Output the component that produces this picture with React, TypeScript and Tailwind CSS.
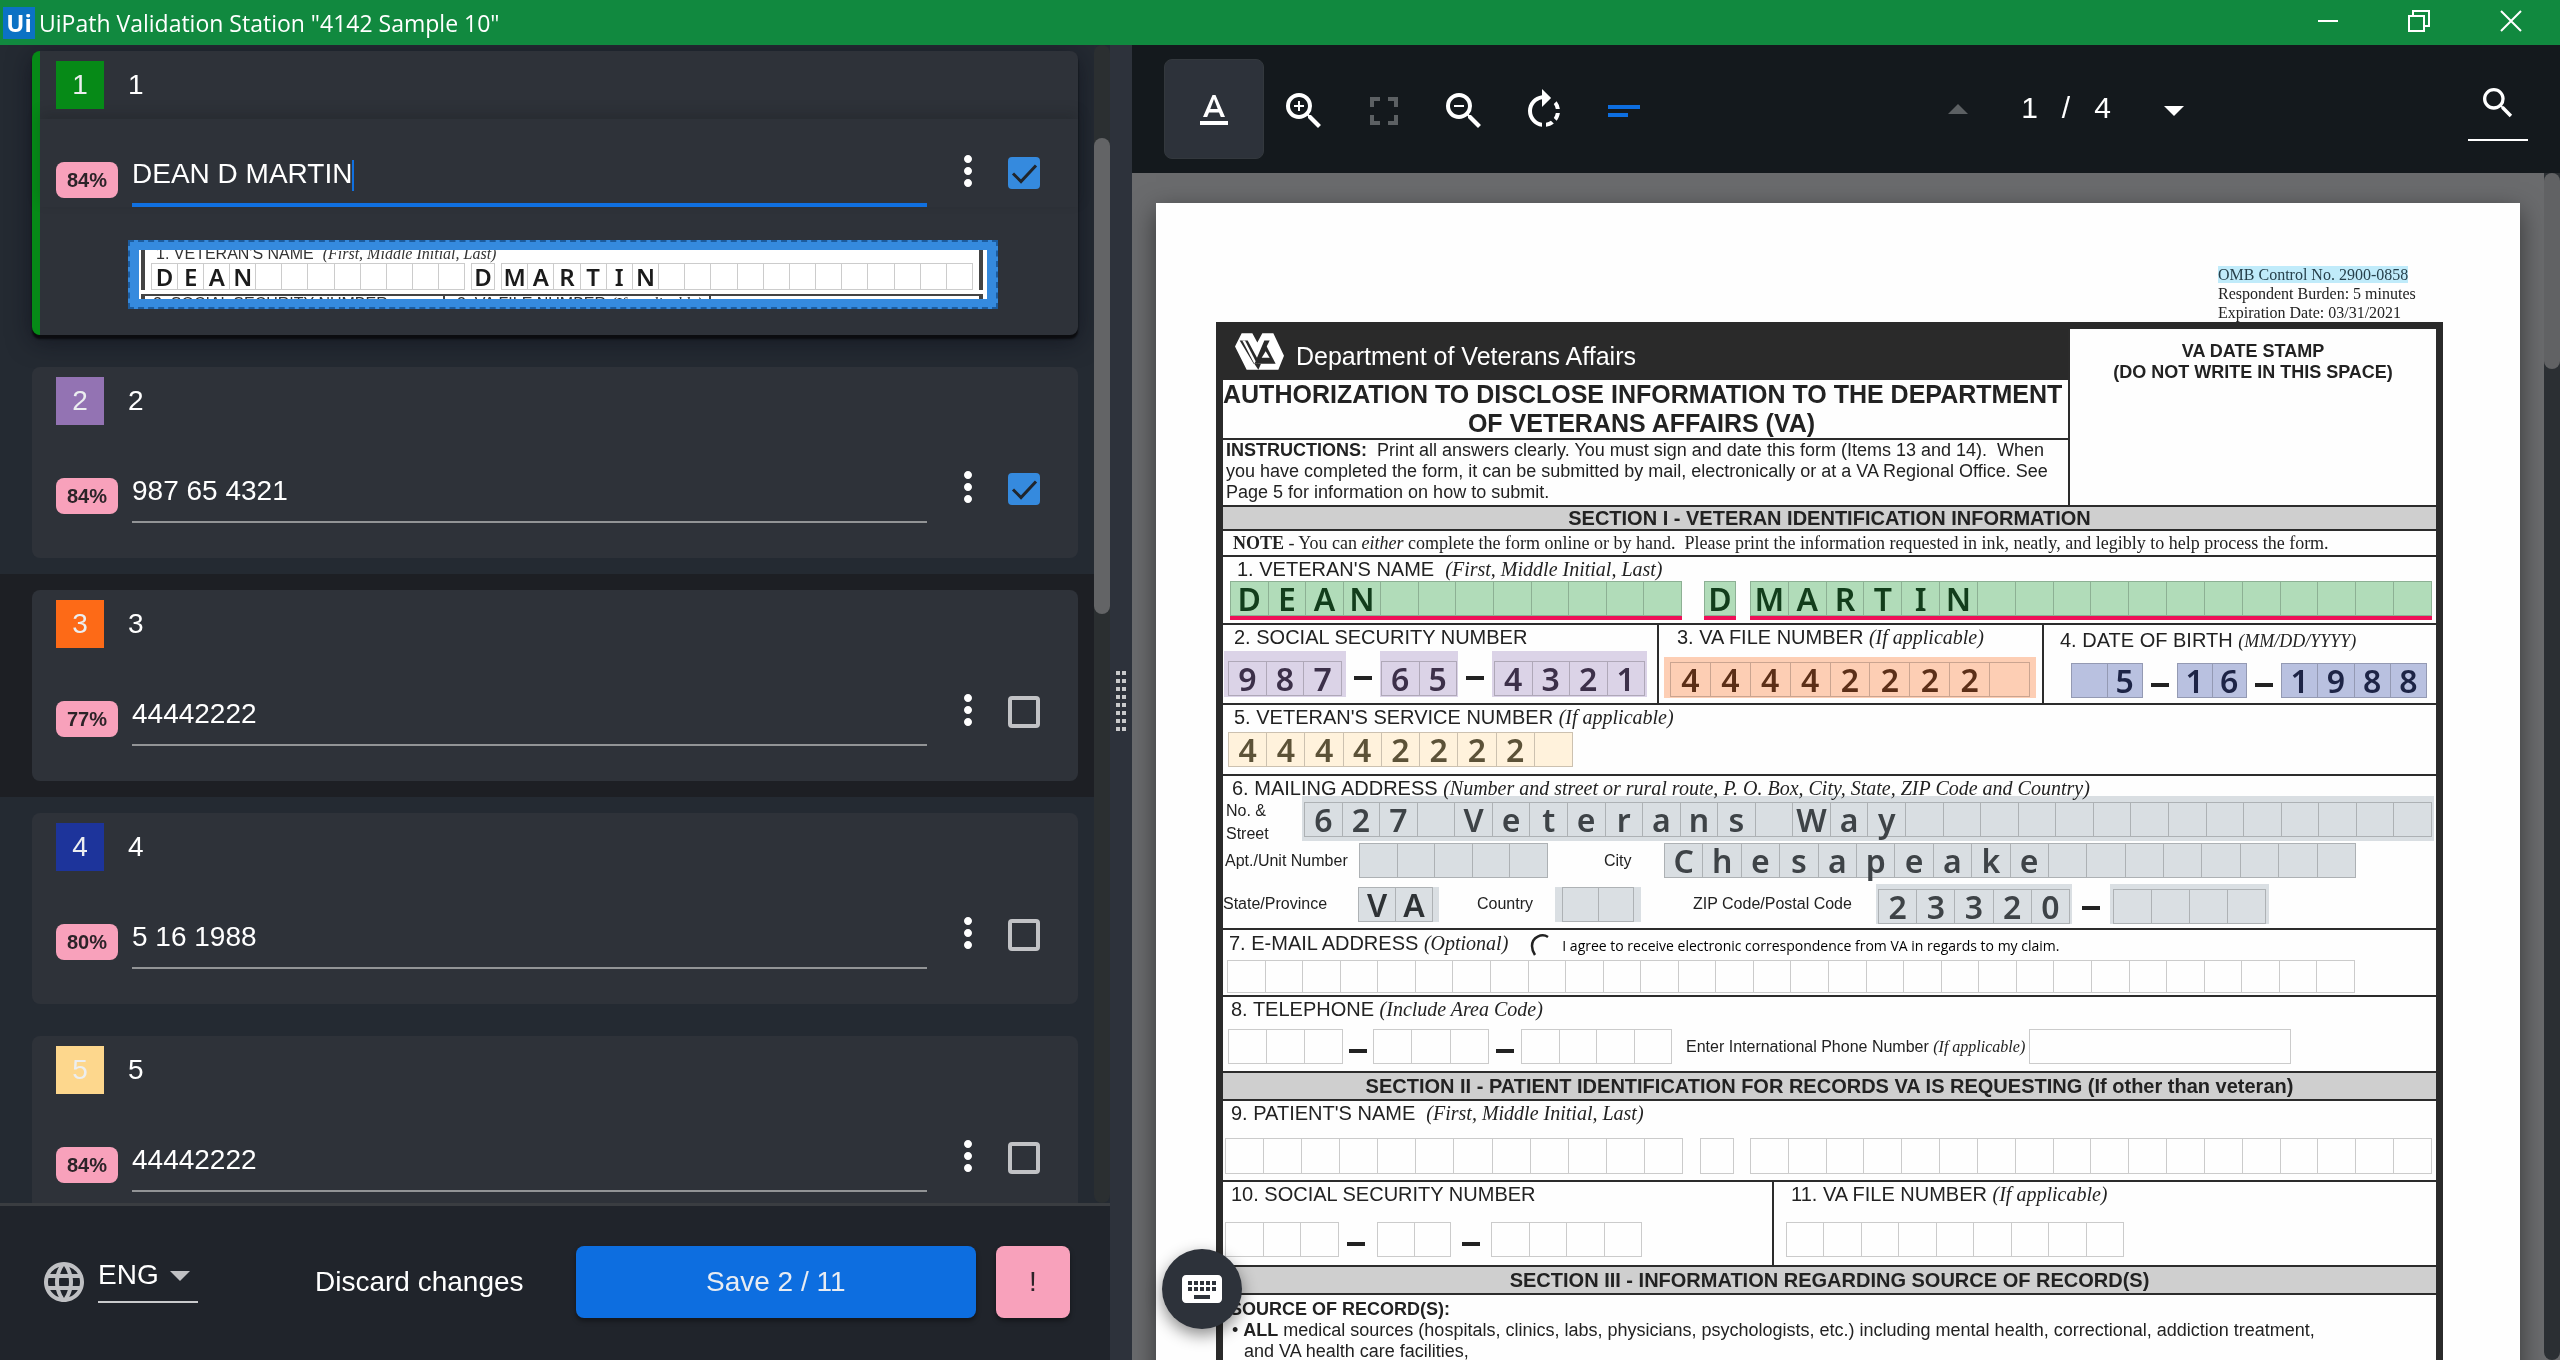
import type { ReactNode } from "react";
import {
  MdArrowDropDown,
  MdArrowDropUp,
  MdFullscreen,
  MdKeyboard,
  MdLanguage,
  MdMoreVert,
  MdRotateRight,
  MdSearch,
  MdShortText,
  MdTextFormat,
  MdZoomIn,
  MdZoomOut,
} from "react-icons/md";

/* ---------- extraction fields (left panel) ---------- */

type Field = {
  id: string;
  value: string;
  confidence: string;
  swatch: string;
  verified: boolean;
  active?: boolean;
  striped?: boolean;
};

const fields: Field[] = [
  { id: "1", value: "DEAN D MARTIN", confidence: "84%", swatch: "bg-[#068a17]", verified: true, active: true },
  { id: "2", value: "987 65 4321", confidence: "84%", swatch: "bg-[#9373b3]", verified: true },
  { id: "3", value: "44442222", confidence: "77%", swatch: "bg-[#fd6a17]", verified: false, striped: true },
  { id: "4", value: "5 16 1988", confidence: "80%", swatch: "bg-[#1d349b]", verified: false },
  { id: "5", value: "44442222", confidence: "84%", swatch: "bg-[#fdd78d]", verified: false },
];

function Snippet() {
  return (
    <div className="mr-[80px] ml-[88px] h-[69px] border-2 border-dashed border-[#1c5c9f] bg-[#358ade] px-[9px] py-2">
      <div className="h-[49px] overflow-hidden bg-white pr-1 pl-[2px] font-['Liberation_Sans'] text-[#333]">
        <div className="border-x-4 border-[#444] px-[6px]">
          <p className="-mt-1 pl-[5px] text-[16px] leading-[16px]">
            1. VETERAN'S NAME&nbsp; <i className="font-['Liberation_Serif']">(First, Middle Initial, Last)</i>
          </p>
          <div className="flex justify-between pt-[1px]">
            <Comb text="DEAN" count={12} width="w-[314px]" height="h-[27px]" size="text-[24px] leading-[25px]" ink="text-[#1b1b1b]" />
            <Comb text="D" count={1} width="w-[24px]" height="h-[27px]" size="text-[24px] leading-[25px]" ink="text-[#1b1b1b]" />
            <Comb text="MARTIN" count={18} width="w-[472px]" height="h-[27px]" size="text-[24px] leading-[25px]" ink="text-[#1b1b1b]" />
          </div>
        </div>
        <div className="mt-1 flex border-x-4 border-t-2 border-[#444] text-[16px] leading-[16px]">
          <span className="w-[300px] border-r-2 border-[#444] pl-2">2. SOCIAL SECURITY NUMBER</span>
          <span className="w-[266px] border-r-2 border-[#444] pl-3">
            3. VA FILE NUMBER <i className="font-['Liberation_Serif']">(If applicable)</i>
          </span>
        </div>
      </div>
    </div>
  );
}

function FieldCard({ field }: { field: Field }) {
  const { id, value, confidence, swatch, verified, active, striped } = field;
  return (
    <section className={`pr-4 pb-4 pl-8 ${active ? "pt-[6px]" : "pt-4"} ${striped ? "bg-[#1d1f24]" : ""}`}>
      <div
        className={`rounded-lg bg-[#2e3239] ${
          active ? "h-[284px] border-l-8 border-[#068a17] pl-4 shadow-[0_4px_2px_#0b0c0f,0_6px_24px_rgba(10,12,24,0.6)]" : "h-[191px] pl-6"
        }`}
      >
        <div className={`flex items-center gap-6 pt-[10px] ${active ? "pb-[10px]" : ""}`}>
          <span className={`grid size-12 place-items-center text-[28px] leading-8 text-[#eceef0] ${swatch}`}>{id}</span>
          <label htmlFor={`field-${id}`} className="text-[28px] leading-8 text-white">
            {id}
          </label>
        </div>
        <div className={`flex items-start pr-[38px] ${active ? "-ml-4 pt-[22px] pl-4 shadow-[0_-6px_12px_rgba(20,22,24,0.22)]" : "pt-8"}`}>
          <span className="mt-[21px] h-9 w-[62px] rounded-lg bg-[#f8a1bb] text-center text-[20px] leading-9 font-bold text-[#2c2328]">
            {confidence}
          </span>
          <div className="relative ml-[14px] flex min-w-0 flex-1">
            <input
              id={`field-${id}`}
              defaultValue={value}
              className={`h-[66px] w-full bg-transparent pt-1 text-[28px] text-white outline-none ${
                active ? "border-b-4 border-[#1070e0]" : "border-b-2 border-[#929496]"
              }`}
            />
            {active && <span className="absolute top-[19px] left-[220px] h-[31px] w-[2px] bg-[#1070e0]" />}
          </div>
          <button aria-label={`Field ${id} options`} className="mt-[6px] ml-[17px] text-white">
            <MdMoreVert className="size-12" />
          </button>
          <label className="mt-4 ml-4 grid size-8">
            <input
              type="checkbox"
              defaultChecked={verified}
              aria-label={`Field ${id} verified`}
              className="col-start-1 row-start-1 size-8 appearance-none rounded-[4px] border-4 border-[#c1c2c5] checked:border-[#358ade] checked:bg-[#358ade]"
            />
            {verified && (
              <svg viewBox="0 0 32 32" className="pointer-events-none col-start-1 row-start-1 size-8" fill="none" stroke="#20252c" strokeWidth="3">
                <path d="M5 16.5l8 8L28 8.5" />
              </svg>
            )}
          </label>
        </div>
        {active && (
          <div className="-ml-6 pt-[33px] pl-2">
            <Snippet />
          </div>
        )}
      </div>
    </section>
  );
}

function FieldsPanel() {
  return (
    <div className="flex min-h-0 min-w-0 flex-col bg-[#242a32]">
      <div className="flex min-h-0 flex-1">
        <div className="min-w-0 flex-1 overflow-hidden">
          {fields.map((f) => (
            <FieldCard key={f.id} field={f} />
          ))}
        </div>
        <div className="w-4 rounded-full bg-[#2b2f31] pt-[93px]">
          <div className="h-[476px] rounded-full bg-[#636466]" />
        </div>
      </div>
      <footer className="flex h-[157px] items-center border-t-[3px] border-[#3a3d41] bg-[#20242b] px-10 pb-[3px] text-[28px]">
        <MdLanguage className="size-12 shrink-0 text-[#bfc0c3]" />
        <label className="-mt-[3px] ml-[10px] flex w-[100px] items-center border-b-2 border-[#c9cacc] pb-2">
          <select aria-label="Language" className="w-[64px] shrink-0 appearance-none bg-transparent leading-9 text-white outline-none">
            <option>ENG</option>
          </select>
          <MdArrowDropDown className="-my-2 -ml-[6px] size-12 shrink-0 text-[#bfc0c3]" />
        </label>
        <button className="ml-[117px] shrink-0 text-white">Discard changes</button>
        <button className="ml-[52px] h-[72px] flex-1 rounded-lg bg-[#0d6ee0] text-[#e8ecf2] shadow-[0_3px_5px_rgba(0,0,0,0.4)]">Save 2 / 11</button>
        <button aria-label="Report exception" className="ml-5 h-[72px] w-[74px] rounded-lg bg-[#f8a1bb] text-[#2c2328] shadow-[0_3px_5px_rgba(0,0,0,0.4)]">
          !
        </button>
      </footer>
    </div>
  );
}

/* ---------- document page (right panel) ---------- */

type CombProps = {
  text?: string;
  count: number;
  width: string;
  height?: string;
  size?: string;
  ink?: string;
};

function Comb({ text = "", count, width, height = "h-[35px]", size = "text-[32px] leading-[33px]", ink = "text-[#222]" }: CombProps) {
  return (
    <div className={`flex shrink-0 border border-black/20 ${width} ${height}`}>
      {Array.from({ length: count }, (_, i) => (
        <span
          key={i}
          className={`flex-1 basis-0 border-r border-black/20 text-center font-['Noto_Sans'] font-semibold last:border-r-0 ${size} ${ink}`}
        >
          {text[i] ?? ""}
        </span>
      ))}
    </div>
  );
}

function Dash({ gap = "mx-2" }: { gap?: string }) {
  return <span className={`mt-2 h-1 w-[18px] shrink-0 bg-[#222] ${gap}`} />;
}

function Serif({ children, small }: { children: ReactNode; small?: boolean }) {
  return <i className={`font-['Liberation_Serif'] ${small ? "text-[18px]" : "text-[20px]"}`}>{children}</i>;
}

function Label({ children, className = "pl-2" }: { children: ReactNode; className?: string }) {
  return <p className={`text-[20px] leading-[24px] whitespace-nowrap ${className}`}>{children}</p>;
}

function Row({ children, className = "" }: { children: ReactNode; className?: string }) {
  return <div className={`border-b-2 border-[#2c2c2c] ${className}`}>{children}</div>;
}

function SectionTitle({ children, tall }: { children: ReactNode; tall?: boolean }) {
  return (
    <h3
      className={`border-b-2 border-[#2c2c2c] bg-[#cfcfcf] text-center text-[20px] font-bold whitespace-nowrap ${tall ? "leading-[26px]" : "leading-[22px]"}`}
    >
      {children}
    </h3>
  );
}

function VaLogo() {
  return (
    <svg viewBox="0 0 147 110" className="h-[37px] w-[49px]">
      <path d="M20 0H52L67 28 82 0H115L147 68 130 110H35L0 40z" fill="#fff" />
      <path d="M14 22H38L66 74 88 22H104L100 30 68 92H56z" fill="#2a2a2a" />
      <path d="M22 22H30L62 84 58 92z" fill="#fff" />
      <path d="M92 34L66 92H122z" fill="#2a2a2a" />
      <path d="M92 54L80 74H104z" fill="#fff" />
      <path d="M58 92L70 110 78 92z" fill="#2a2a2a" />
    </svg>
  );
}

function DocumentPage() {
  return (
    <article className="h-[1300px] w-full bg-[#fefefe] pt-[62px] pr-[77px] pl-[60px] font-['Liberation_Sans'] text-[#222] shadow-[0_8px_24px_rgba(0,0,0,0.5)]">
      <div className="ml-auto w-[225px] font-['Liberation_Serif'] text-[16px] leading-[19px] whitespace-nowrap">
        <p>
          <mark className="bg-[#c0ebfa] text-[#27414c]">OMB Control No. 2900-0858</mark>
        </p>
        <p>Respondent Burden: 5 minutes</p>
        <p>Expiration Date: 03/31/2021</p>
      </div>

      <div className="border-[7px] border-[#2a2a2a]">
        <div className="flex border-b-2 border-[#2c2c2c]">
          <div className="min-w-0 flex-1 border-r-2 border-[#2c2c2c]">
            <div className="flex h-[51px] items-center gap-3 bg-[#2a2a2a] pb-[6px] pl-3 text-white">
              <VaLogo />
              <span className="pt-2 text-[25px] leading-8">Department of Veterans Affairs</span>
            </div>
            <h2 className="border-b-2 border-[#2c2c2c] pr-2 text-center text-[25px] leading-[29px] font-bold whitespace-nowrap">
              AUTHORIZATION TO DISCLOSE INFORMATION TO THE DEPARTMENT
              <br />
              OF VETERANS AFFAIRS (VA)
            </h2>
            <p className="pb-[2px] pl-[3px] text-[18px] leading-[21px] whitespace-nowrap">
              <b>INSTRUCTIONS:</b>&nbsp; Print all answers clearly. You must sign and date this form (Items 13 and 14).&nbsp; When
              <br />
              you have completed the form, it can be submitted by mail, electronically or at a VA Regional Office. See
              <br />
              Page 5 for information on how to submit.
            </p>
          </div>
          <p className="w-[366px] pt-3 text-center text-[18px] leading-[21px] font-bold">
            VA DATE STAMP
            <br />
            (DO NOT WRITE IN THIS SPACE)
          </p>
        </div>

        <SectionTitle>SECTION I - VETERAN IDENTIFICATION INFORMATION</SectionTitle>
        <Row>
          <p className="pl-[10px] font-['Liberation_Serif'] text-[18px] leading-[24px] whitespace-nowrap">
            <b>NOTE</b> - You can <i>either</i> complete the form online or by hand.&nbsp; Please print the information requested in ink, neatly, and
            legibly to help process the form.
          </p>
        </Row>

        <Row className="h-[68px]">
          <Label className="pl-[14px]">
            1. VETERAN'S NAME&nbsp; <Serif>(First, Middle Initial, Last)</Serif>
          </Label>
          <div className="flex items-start pl-[7px]">
            <div className="border-b-4 border-[#ee1058] bg-[#b1dcb9]">
              <Comb text="DEAN" count={12} width="w-[452px]" ink="text-[#123d1b]" />
            </div>
            <div className="ml-[22px] border-b-4 border-[#ee1058] bg-[#b1dcb9]">
              <Comb text="D" count={1} width="w-[32px]" ink="text-[#123d1b]" />
            </div>
            <div className="ml-[14px] border-b-4 border-[#ee1058] bg-[#b1dcb9]">
              <Comb text="MARTIN" count={18} width="w-[682px]" ink="text-[#123d1b]" />
            </div>
          </div>
        </Row>

        <Row className="flex h-[80px]">
          <div className="w-[436px] border-r-2 border-[#2c2c2c]">
            <Label className="pl-[11px]">2. SOCIAL SECURITY NUMBER</Label>
            <div className="flex items-center pt-[2px] pl-[1px]">
              <div className="bg-[#dbd3e7] px-1 pt-[10px] pb-[1px]">
                <Comb text="987" count={3} width="w-[114px]" ink="text-[#3c3049]" />
              </div>
              <Dash />
              <div className="bg-[#dbd3e7] px-[1px] pt-[10px] pb-[1px]">
                <Comb text="65" count={2} width="w-[76px]" ink="text-[#3c3049]" />
              </div>
              <Dash />
              <div className="bg-[#dbd3e7] px-[2px] pt-[10px] pb-[1px]">
                <Comb text="4321" count={4} width="w-[151px]" ink="text-[#3c3049]" />
              </div>
            </div>
          </div>
          <div className="w-[385px] border-r-2 border-[#2c2c2c]">
            <Label className="pl-[18px]">
              3. VA FILE NUMBER <Serif>(If applicable)</Serif>
            </Label>
            <div className="mt-[8px] ml-[5px] w-[372px] bg-[#fdceb4] px-[6px] pt-[5px] pb-[1px]">
              <Comb text="44442222" count={9} width="w-[360px]" ink="text-[#5c2f18]" />
            </div>
          </div>
          <div className="flex-1">
            <Label className="pt-[3px] pl-[16px]">
              4. DATE OF BIRTH <Serif small>(MM/DD/YYYY)</Serif>
            </Label>
            <div className="flex items-center pt-[10px] pl-[27px]">
              <div className="bg-[#b9c1e0]">
                <Comb text=" 5" count={2} width="w-[72px]" ink="text-[#1d2446]" />
              </div>
              <Dash />
              <div className="bg-[#b9c1e0]">
                <Comb text="16" count={2} width="w-[70px]" ink="text-[#1d2446]" />
              </div>
              <Dash />
              <div className="bg-[#b9c1e0]">
                <Comb text="1988" count={4} width="w-[146px]" ink="text-[#1d2446]" />
              </div>
            </div>
          </div>
        </Row>

        <Row className="h-[71px]">
          <Label className="pl-[11px]">
            5. VETERAN'S SERVICE NUMBER <Serif>(If applicable)</Serif>
          </Label>
          <div className="mt-[3px] ml-[5px] w-[345px] bg-[#fff2dc]">
            <Comb text="44442222" count={9} width="w-[345px]" ink="text-[#5c5238]" />
          </div>
        </Row>

        <Row className="h-[154px] text-[16px]">
          <Label className="pl-[9px]">
            6. MAILING ADDRESS <Serif>(Number and street or rural route, P. O. Box, City, State, ZIP Code and Country)</Serif>
          </Label>
          <div className="-mt-1 flex items-start">
            <p className="w-[79px] pt-[3px] pl-[3px] leading-[23px]">
              No. &amp;
              <br />
              Street
            </p>
            <div className="-mr-1 bg-[#dadfe3] px-[2px] pt-[6px] pb-1 mix-blend-multiply">
              <Comb text="627 Veterans Way" count={30} width="w-[1128px]" ink="text-[#3e4347]" />
            </div>
          </div>
          <div className="-mt-[2px] flex items-start leading-[35px] whitespace-nowrap">
            <span className="w-[136px] pl-[2px]">Apt./Unit Number</span>
            <div className="bg-[#dadfe3] mix-blend-multiply">
              <Comb count={5} width="w-[189px]" />
            </div>
            <span className="w-[116px] pl-[56px]">City</span>
            <div className="bg-[#dadfe3] mix-blend-multiply">
              <Comb text="Chesapeake" count={18} width="w-[692px]" ink="text-[#3e4347]" />
            </div>
          </div>
          <div className="flex items-center pt-[6px] leading-[40px] whitespace-nowrap">
            <span className="w-[135px]">State/Province</span>
            <div className="bg-[#dadfe3] pr-[6px]">
              <Comb text="VA" count={2} width="w-[75px]" ink="text-[#2e3235]" />
            </div>
            <span className="w-[116px] pl-[38px]">Country</span>
            <div className="bg-[#dadfe3] px-[7px]">
              <Comb count={2} width="w-[72px]" />
            </div>
            <span className="w-[235px] pl-[52px]">ZIP Code/Postal Code</span>
            <div className="bg-[#dadfe3] px-[2px] pt-[5px]">
              <Comb text="23320" count={5} width="w-[192px]" ink="text-[#3e4347]" />
            </div>
            <Dash gap="mx-[10px]" />
            <div className="bg-[#dadfe3] px-[3px] pt-[5px]">
              <Comb count={4} width="w-[153px]" />
            </div>
          </div>
        </Row>

        <Row className="h-[67px]">
          <div className="flex h-[26px] items-center">
            <Label className="pl-[6px]">
              7. E-MAIL ADDRESS <Serif>(Optional)</Serif>
            </Label>
            <svg viewBox="0 0 20 24" className="mt-1 ml-[22px] h-6 w-5" fill="none" stroke="#222" strokeWidth="2.5">
              <path d="M18 4C12 0 2 4 2 13c0 3 1 6 3 9" />
            </svg>
            <span className="pt-[6px] pl-3 font-['Open_Sans'] text-[14px] leading-[18px] font-medium whitespace-nowrap text-black">
              I agree to receive electronic correspondence from VA in regards to my claim.
            </span>
          </div>
          <div className="mt-1 pl-1">
            <Comb count={30} width="w-[1128px]" height="h-[33px]" />
          </div>
        </Row>

        <Row className="h-[76px]">
          <Label>
            8. TELEPHONE <Serif>(Include Area Code)</Serif>
          </Label>
          <div className="flex items-center pt-[8px] pl-[5px] text-[16px] whitespace-nowrap">
            <Comb count={3} width="w-[115px]" />
            <Dash gap="mx-[6px]" />
            <Comb count={3} width="w-[116px]" />
            <Dash gap="mx-[7px]" />
            <Comb count={4} width="w-[151px]" />
            <span className="pl-[14px]">
              Enter International Phone Number <i className="font-['Liberation_Serif']">(If applicable)</i>
            </span>
            <Comb count={1} width="ml-1 w-[262px]" />
          </div>
        </Row>

        <SectionTitle tall>SECTION II - PATIENT IDENTIFICATION FOR RECORDS VA IS REQUESTING (If other than veteran)</SectionTitle>
        <Row className="h-[81px]">
          <Label>
            9. PATIENT'S NAME&nbsp; <Serif>(First, Middle Initial, Last)</Serif>
          </Label>
          <div className="flex pt-[13px] pl-[2px]">
            <Comb count={12} width="w-[458px]" height="h-[36px]" />
            <Comb count={1} width="ml-[17px] w-[34px]" height="h-[36px]" />
            <Comb count={18} width="ml-4 w-[682px]" height="h-[36px]" />
          </div>
        </Row>
        <Row className="flex h-[85px]">
          <div className="w-[551px] border-r-2 border-[#2c2c2c]">
            <Label>10. SOCIAL SECURITY NUMBER</Label>
            <div className="flex items-center pt-[16px] pl-[2px]">
              <Comb count={3} width="w-[114px]" />
              <Dash gap="mr-[12px] ml-[8px]" />
              <Comb count={2} width="w-[74px]" />
              <Dash gap="mx-[11px]" />
              <Comb count={4} width="w-[151px]" />
            </div>
          </div>
          <div className="flex-1">
            <Label className="pl-[17px]">
              11. VA FILE NUMBER <Serif>(If applicable)</Serif>
            </Label>
            <div className="pt-[16px] pl-[12px]">
              <Comb count={9} width="w-[338px]" />
            </div>
          </div>
        </Row>
        <SectionTitle tall>SECTION III - INFORMATION REGARDING SOURCE OF RECORD(S)</SectionTitle>
        <div className="h-[300px] pt-1 pl-[7px] text-[18px] leading-[21px] whitespace-nowrap">
          <p className="font-bold">SOURCE OF RECORD(S):</p>
          <p className="pl-[2px]">
            • <b>ALL</b> medical sources (hospitals, clinics, labs, physicians, psychologists, etc.) including mental health, correctional, addiction
            treatment,
          </p>
          <p className="pl-[14px]">and VA health care facilities,</p>
        </div>
      </div>
    </article>
  );
}

function ToolButton({ label, className = "text-white", children }: { label: string; className?: string; children: ReactNode }) {
  return (
    <button aria-label={label} className={`grid h-[100px] w-20 shrink-0 place-items-center ${className}`}>
      {children}
    </button>
  );
}

function Viewer() {
  return (
    <div className="flex min-h-0 min-w-0 flex-col bg-[#6a6b6d]">
      <div className="flex h-32 items-center bg-[#14191d] pr-8 pl-8">
        <button
          aria-label="Text selection"
          className="grid size-[100px] shrink-0 place-items-center rounded-lg border border-[#33383d] bg-[#2d323a] pt-1 text-white"
        >
          <MdTextFormat className="size-12" />
        </button>
        <div className="flex pt-1">
          <ToolButton label="Zoom in">
            <MdZoomIn className="size-12" />
          </ToolButton>
          <ToolButton label="Fit page" className="text-[#5c6063]">
            <MdFullscreen className="size-12" />
          </ToolButton>
          <ToolButton label="Zoom out">
            <MdZoomOut className="size-12" />
          </ToolButton>
          <ToolButton label="Rotate">
            <MdRotateRight className="size-12" />
          </ToolButton>
          <ToolButton label="Text lines" className="text-[#0d6ee0]">
            <MdShortText className="size-12" />
          </ToolButton>
        </div>
        <div className="mr-[270px] ml-auto flex items-center pt-[2px] text-white">
          <button aria-label="Previous page" className="text-[#5c6063]">
            <MdArrowDropUp className="size-12" />
          </button>
          <p className="flex w-[168px] justify-center gap-6 pb-1 text-[30px] leading-10">
            <span>1</span>
            <span>/</span>
            <span>4</span>
          </p>
          <button aria-label="Next page">
            <MdArrowDropDown className="size-12" />
          </button>
        </div>
        <button aria-label="Search document" className="grid h-[64px] w-[60px] place-items-start justify-center border-b-2 border-white pt-[6px] text-white">
          <MdSearch className="size-10" />
        </button>
      </div>
      <div className="relative flex min-h-0 flex-1 overflow-hidden">
        <div className="min-w-0 flex-1 px-6 pt-[30px]">
          <DocumentPage />
        </div>
        <div className="w-4 rounded-b-full bg-[#2b2f33]">
          <div className="h-[196px] rounded-full bg-[#616264]" />
        </div>
        <button
          aria-label="Keyboard shortcuts"
          className="absolute bottom-[31px] left-[30px] grid size-20 place-items-center rounded-full bg-[#2d323a] text-white shadow-[0_6px_16px_rgba(0,0,0,0.45)]"
        >
          <MdKeyboard className="size-12" />
        </button>
      </div>
    </div>
  );
}

function TitleBar() {
  return (
    <header className="flex h-[45px] shrink-0 items-center bg-[#11893f] pr-[38px] pl-[3px] text-white">
      <span className="grid h-8 w-8 place-items-center bg-[#0b72c4] font-['Open_Sans'] text-[24px] leading-8 font-bold">Ui</span>
      <h1 className="flex-1 pl-1 font-['Open_Sans'] text-[23px] leading-8">UiPath Validation Station "4142 Sample 10"</h1>
      <div className="flex items-center gap-[50px] pb-1">
        <button aria-label="Minimize" className="p-5">
          <span className="block h-[2px] w-5 bg-white" />
        </button>
        <button aria-label="Restore">
          <svg viewBox="0 0 22 22" className="size-[22px]" fill="none" stroke="#fff" strokeWidth="2">
            <path d="M1 6h15v15H1zM5 6V1h16v15h-5" />
          </svg>
        </button>
        <button aria-label="Close" className="ml-5">
          <svg viewBox="0 0 22 22" className="size-[22px]" fill="none" stroke="#fff" strokeWidth="2">
            <path d="M1 1l20 20M21 1L1 21" />
          </svg>
        </button>
      </div>
    </header>
  );
}

export default function App() {
  return (
    <div className="flex h-screen flex-col overflow-hidden bg-[#242a32] font-['Liberation_Sans',sans-serif]">
      <TitleBar />
      <main className="grid min-h-0 flex-1 grid-cols-[1110fr_22px_1428fr] grid-rows-[minmax(0,1fr)]">
        <FieldsPanel />
        <div className="flex items-center justify-center bg-[#2d323b] pb-1">
          <div className="grid grid-cols-2 gap-x-[2px] gap-y-1">
            {Array.from({ length: 16 }, (_, i) => (
              <span key={i} className="size-1 bg-[#c9cacc]" />
            ))}
          </div>
        </div>
        <Viewer />
      </main>
    </div>
  );
}
